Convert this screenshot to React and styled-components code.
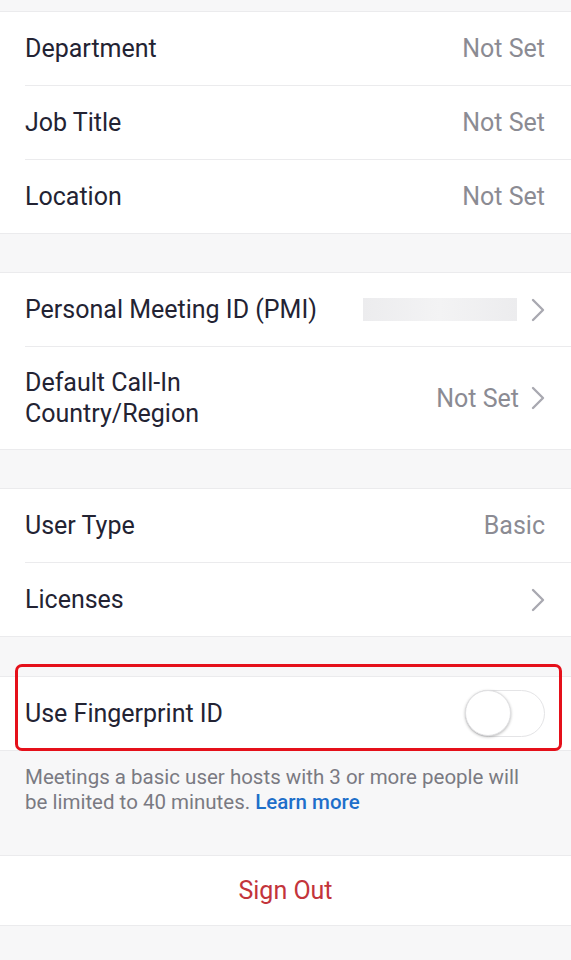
import React from 'react';
import styled, { createGlobalStyle } from 'styled-components';

const GlobalStyle = createGlobalStyle`
    html, body {
        margin: 0;
        padding: 0;
        background: #f7f7f8;
        font-family: Roboto, "Liberation Sans", sans-serif;
    }
`

const Page = styled.div`
    width: 571px;
    min-height: 960px;
    background: #f7f7f8;
    padding-top: 11px;
    box-sizing: border-box;
`

const Group = styled.div`
    background: #fff;
    border-top: 1px solid #ebebed;
    border-bottom: 1px solid #ebebed;
    margin-bottom: ${props => props.$gap || 0}px;
    position: relative;
`

const Row = styled.div`
    display: flex;
    align-items: center;
    justify-content: space-between;
    height: ${props => props.$height || 73}px;
    padding: 0 26px 0 25px;
    box-sizing: border-box;
    position: relative;

    &:not(:first-child) {
        margin-top: 1px;
    }
    &:not(:first-child)::before {
        content: '';
        position: absolute;
        left: 25px;
        right: 0;
        top: -1px;
        height: 1px;
        background: #ebebed;
    }
`

const Label = styled.div`
    font-size: 25px;
    color: #232333;
    line-height: 31px;
`

const Right = styled.div`
    display: flex;
    align-items: center;
    gap: 12px;
`

const Value = styled.div`
    font-size: 25px;
    color: #8b8b93;
`

const Blur = styled.div`
    width: 154px;
    height: 23px;
    margin-right: 2px;
    background: linear-gradient(90deg, #ececee 0%, #f3f3f4 50%, #ececee 100%);
`

const Chevron = () => (
    <svg width="14" height="24" viewBox="0 0 14 24">
        <path d="M2 2 L12 12 L2 22" fill="none" stroke="#a9a9b1" strokeWidth="2.4" strokeLinecap="round" strokeLinejoin="round"/>
    </svg>
)

const Toggle = styled.div`
    width: 80px;
    height: 47px;
    border-radius: 24px;
    border: 1.5px solid #e4e4e6;
    box-sizing: border-box;
    background: #fff;
    position: relative;

    &::after {
        content: '';
        position: absolute;
        left: -1px;
        top: -1px;
        width: 46px;
        height: 46px;
        border-radius: 50%;
        background: #fff;
        box-shadow: 0 1px 3px rgba(0,0,0,0.28);
        box-sizing: border-box;
        border: 1px solid #e0e0e2;
    }
`

// 강조 표시용 빨간 테두리 (행 위에 겹쳐서 그림)
const Highlight = styled.div`
    position: absolute;
    left: 15px;
    right: 9px;
    top: -13px;
    bottom: -1px;
    border: 3.5px solid #e5101a;
    border-radius: 7px;
    pointer-events: none;
`

const Note = styled.p`
    margin: 0;
    padding: 14px 40px 40px 25px;
    font-size: 20.5px;
    line-height: 25px;
    color: #7a7a82;

    a {
        color: #1e6fca;
        font-weight: 500;
        text-decoration: none;
    }
`

const SignOut = styled.div`
    height: 69px;
    display: flex;
    align-items: center;
    justify-content: center;
    font-size: 25px;
    color: #c3343b;
`

const App = () => {
    return (
        <Page>
            <GlobalStyle/>
            <Group $gap={38}>
                <Row><Label>Department</Label><Value>Not Set</Value></Row>
                <Row><Label>Job Title</Label><Value>Not Set</Value></Row>
                <Row><Label>Location</Label><Value>Not Set</Value></Row>
            </Group>
            <Group $gap={38}>
                <Row>
                    <Label>Personal Meeting ID (PMI)</Label>
                    <Right><Blur/><Chevron/></Right>
                </Row>
                <Row $height={102}>
                    <Label>Default Call-In<br/>Country/Region</Label>
                    <Right><Value>Not Set</Value><Chevron/></Right>
                </Row>
            </Group>
            <Group $gap={39}>
                <Row><Label>User Type</Label><Value>Basic</Value></Row>
                <Row><Label>Licenses</Label><Right><Chevron/></Right></Row>
            </Group>
            <Group>
                <Row>
                    <Label>Use Fingerprint ID</Label>
                    <Toggle/>
                </Row>
                <Highlight/>
            </Group>
            <Note>
                Meetings a basic user hosts with 3 or more people will be limited to 40 minutes. <a href="#">Learn more</a>
            </Note>
            <Group>
                <SignOut>Sign Out</SignOut>
            </Group>
        </Page>
    );
};

export default App;
